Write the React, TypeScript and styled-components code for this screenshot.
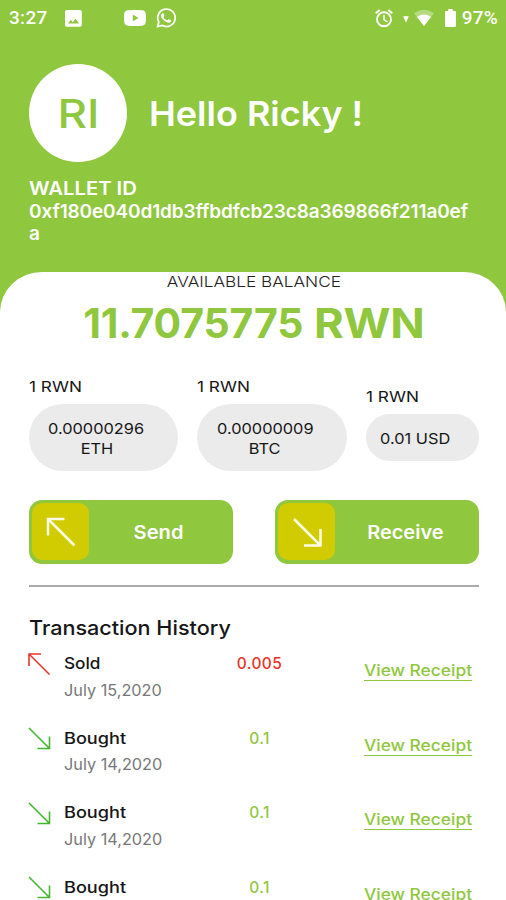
import React from "react";
import styled, { createGlobalStyle } from "styled-components";

const green = "#8fc73e";

const GlobalStyle = createGlobalStyle`
  * { box-sizing: border-box; }
  body {
    margin: 0;
    background: #fff;
    font-family: Inter, "Open Sans", sans-serif;
    color: #161616;
  }
`;

const Screen = styled.div`
  width: 506px;
  height: 900px;
  overflow: hidden;
  display: flex;
  flex-direction: column;
  background: ${green};
`;

const Wide = styled.span<{ $x: number; $origin?: string }>`
  display: inline-block;
  transform: scaleX(${(p) => p.$x});
  transform-origin: ${(p) => p.$origin ?? "left"} center;
`;

const StatusBar = styled.header`
  flex: none;
  height: 36px;
  padding: 0 8px 0 9px;
  display: flex;
  align-items: center;
  color: #fff;
  font: 500 19px/36px Roboto, sans-serif;
`;

const StatusText = styled.span<{ $spacing: number }>`
  letter-spacing: ${(p) => p.$spacing}px;
  white-space: nowrap;
`;

const StatusIcon = styled.svg<{ $gap: number }>`
  flex: none;
  display: block;
  margin-left: ${(p) => p.$gap}px;
`;

const Spacer = styled.div`
  flex: 1;
`;

const Profile = styled.section`
  flex: none;
  margin: 28px 29px 0;
  display: flex;
  align-items: center;
  gap: 21.5px;
`;

const Avatar = styled.div`
  width: 98px;
  height: 98px;
  border-radius: 50%;
  background: #fff;
  color: ${green};
  display: flex;
  align-items: center;
  justify-content: center;
  font-size: 40px;
  font-weight: 500;
`;

const Greeting = styled.h1`
  margin: 0;
  color: #fff;
  font-size: 34px;
  font-weight: 600;
  white-space: nowrap;
`;

const Wallet = styled.section`
  flex: none;
  margin: 16px 29px 0;
  height: 93.5px;
  color: #fff;
  font-size: 19px;
  line-height: 22.5px;
  font-weight: 600;
`;

const WalletAddress = styled.div`
  letter-spacing: -0.13px;
  word-break: break-all;
`;

const Sheet = styled.main`
  flex: 1;
  min-height: 0;
  overflow: hidden;
  background: #fff;
  border-radius: 42px 42px 0 0 / 40px 40px 0 0;
  padding: 0 27px 0 29px;
  display: flex;
  flex-direction: column;
`;

const BalanceLabel = styled.div`
  flex: none;
  height: 20px;
  line-height: 20px;
  text-align: center;
  font-size: 15px;
  font-weight: 300;
  color: #222;
`;

const Balance = styled.div`
  flex: none;
  height: 64px;
  line-height: 63px;
  padding-right: 11px;
  text-align: center;
  font-size: 41px;
  font-weight: 700;
  letter-spacing: -0.2px;
  word-spacing: 1px;
  color: ${green};
  white-space: nowrap;
`;

const Rates = styled.section`
  flex: none;
  height: 96px;
  margin-top: 20px;
  display: flex;
  align-items: center;
  justify-content: space-between;
`;

const Rate = styled.div<{ $width: number }>`
  width: ${(p) => p.$width}px;
`;

const RateBase = styled.div`
  height: 28px;
  line-height: 22px;
  font-size: 15px;
  font-weight: 400;
`;

const RatePill = styled.div`
  padding: 14.5px 28px 12.5px 14px;
  border-radius: 34px;
  background: #ebebeb;
  display: flex;
  flex-direction: column;
  align-items: center;
  font-size: 15px;
  line-height: 20px;
  font-weight: 400;
  white-space: nowrap;
`;

const Actions = styled.section`
  flex: none;
  margin-top: 28px;
  display: flex;
  justify-content: space-between;
`;

const ActionButton = styled.button`
  width: 204px;
  height: 64.5px;
  padding: 0 0 0 3px;
  border: 0;
  border-radius: 13px;
  background: ${green};
  color: #fff;
  display: flex;
  align-items: center;
  font: 600 19px/24px Inter, sans-serif;
`;

const ActionIcon = styled.span`
  width: 57px;
  height: 57px;
  border-radius: 10px;
  background: #d1cb02;
  display: flex;
  align-items: center;
  justify-content: center;
  padding: 1px 0 0 2px;
`;

const ActionLabel = styled.span`
  flex: 1;
  padding: 2px 4px 0 0;
  text-align: center;
`;

const Divider = styled.hr`
  flex: none;
  width: 100%;
  height: 1.5px;
  margin: 21px 0 0;
  border: 0;
  background: #aaa;
`;

const HistoryTitle = styled.h2`
  flex: none;
  margin: 27.5px 0 10px;
  line-height: 28px;
  font-size: 20px;
  font-weight: 500;
`;

const Transaction = styled.article`
  flex: none;
  height: 74.5px;
  display: grid;
  grid-template-columns: 35px 140px 111px 1fr;
`;

const Kind = styled.div`
  font-size: 15.5px;
  line-height: 24px;
  font-weight: 500;
`;

const DateText = styled.div`
  margin-top: 2.5px;
  font-size: 15.5px;
  line-height: 24px;
  font-weight: 400;
  color: #777;
`;

const Amount = styled.div<{ $sold: boolean }>`
  text-align: center;
  font-size: 15.5px;
  line-height: 24px;
  font-weight: 500;
  letter-spacing: 0.4px;
  color: ${(p) => (p.$sold ? "#ea3328" : green)};
`;

const ReceiptLink = styled.a`
  justify-self: end;
  align-self: start;
  width: 108px;
  margin: 7px 7.5px 0 0;
  height: 22px;
  line-height: 23px;
  border-bottom: 1.5px solid ${green};
  font-size: 15.5px;
  font-weight: 500;
  color: ${green};
  white-space: nowrap;
`;

const ArrowSvg = styled.svg`
  display: block;
  overflow: visible;
`;

const TransactionIcon = styled.div`
  padding: 1.5px 0 0 0.3px;
`;

interface ArrowProps {
  up: boolean;
  size: number;
  color: string;
  stroke: number;
  head: number;
}

function Arrow({ up, size, color, stroke, head }: ArrowProps) {
  const d = up
    ? `M${size} ${size} L0 0 M${head} 0 H0 V${head}`
    : `M0 0 L${size} ${size} M${size} ${size - head} V${size} H${size - head}`;
  return (
    <ArrowSvg width={size} height={size} viewBox={`0 0 ${size} ${size}`} fill="none">
      <path d={d} stroke={color} strokeWidth={stroke} />
    </ArrowSvg>
  );
}

const rates = [
  { lines: ["0.00000296", "ETH"], width: 149 },
  { lines: ["0.00000009", "BTC"], width: 150 },
  { lines: ["0.01 USD"], width: 113 },
];

const transactions = [
  { kind: "Sold", date: "July 15,2020", amount: "0.005" },
  { kind: "Bought", date: "July 14,2020", amount: "0.1" },
  { kind: "Bought", date: "July 14,2020", amount: "0.1" },
  { kind: "Bought", date: "July 14,2020", amount: "0.1" },
];

function Status() {
  return (
    <StatusBar>
      <StatusText $spacing={0.3}>3:27</StatusText>
      <StatusIcon $gap={17} width="17" height="17" viewBox="0 0 17 17">
        <path fill="#fff" fillRule="evenodd" d="M1.8 0H15a1.8 1.8 0 0 1 1.8 1.8V15a1.8 1.8 0 0 1-1.8 1.8H1.8A1.8 1.8 0 0 1 0 15V1.8A1.8 1.8 0 0 1 1.8 0ZM3 13.5h11L10.6 8.7 7.8 12.2 5.9 9.8Z" />
      </StatusIcon>
      <StatusIcon $gap={42} width="22" height="16" viewBox="0 0 22 16">
        <path fill="#fff" fillRule="evenodd" d="M4 .3Q11-.3 18 .3Q21.5.5 21.8 4Q22.2 8 21.8 12Q21.5 15.3 18 15.7Q11 16.3 4 15.7Q.5 15.3.2 12Q-.2 8 .2 4Q.5.5 4 .3ZM8.8 4.6v6.6L14.5 7.9Z" />
      </StatusIcon>
      <StatusIcon $gap={10} width="20" height="20" viewBox="0 0 24 24">
        <path fill="#fff" d="M17.472 14.382c-.297-.149-1.758-.867-2.03-.967-.273-.099-.471-.148-.67.15-.197.297-.767.966-.94 1.164-.173.199-.347.223-.644.075-.297-.15-1.255-.463-2.39-1.475-.883-.788-1.48-1.761-1.653-2.059-.173-.297-.018-.458.13-.606.134-.133.298-.347.446-.52.149-.174.198-.298.298-.497.099-.198.05-.371-.025-.52-.075-.149-.669-1.612-.916-2.207-.242-.579-.487-.5-.669-.51-.173-.008-.371-.01-.57-.01-.198 0-.52.074-.792.372-.272.297-1.04 1.016-1.04 2.479 0 1.462 1.065 2.875 1.213 3.074.149.198 2.096 3.2 5.077 4.487.709.306 1.262.489 1.694.625.712.227 1.36.195 1.871.118.571-.085 1.758-.719 2.006-1.413.248-.694.248-1.289.173-1.413-.074-.124-.272-.198-.57-.347" />
        <path fill="none" stroke="#fff" strokeWidth="2.1" d="M2 22.2 3.4 16.9A10.5 10.5 0 1 1 7.2 20.8Z" />
      </StatusIcon>
      <Spacer />
      <StatusIcon $gap={0} width="18" height="19" viewBox="0 0 18 19" fill="none" stroke="#fff">
        <circle cx="9" cy="10.3" r="7" strokeWidth="1.9" />
        <path strokeWidth="1.5" d="M9 6v4.6l3.4 2.2" />
        <path strokeWidth="2" d="M.7 4.2 4.7 1M17.3 4.2 13.3 1" />
      </StatusIcon>
      <StatusIcon $gap={10} width="6" height="10" viewBox="0 0 6 10">
        <path fill="#fff" d="M.2 3.2H5.8L3 9.8Z" />
      </StatusIcon>
      <StatusIcon $gap={5} width="20" height="16" viewBox="0 0 20 16">
        <path fill="#fff" fillOpacity=".35" d="M0 3.2Q10-3.2 20 3.2L10 16Z" />
        <path fill="#fff" d="M3 6.9Q10 2.2 17 6.9L10 16Z" />
      </StatusIcon>
      <StatusIcon $gap={11} width="11" height="18" viewBox="0 0 11 18">
        <path fill="#fff" d="M3.2 0H7.8V2H9.8Q11 2 11 3.2V16.8Q11 18 9.8 18H1.2Q0 18 0 16.8V3.2Q0 2 1.2 2H3.2Z" />
      </StatusIcon>
      <StatusIcon $gap={5} width="1" height="1" />
      <StatusText $spacing={0.2}>97%</StatusText>
    </StatusBar>
  );
}

export default function App() {
  return (
    <>
      <GlobalStyle />
      <Screen>
        <Status />
        <Profile>
          <Avatar>
            <Wide $x={1.14} $origin="center">RI</Wide>
          </Avatar>
          <Greeting>
            <Wide $x={1.058}>Hello Ricky !</Wide>
          </Greeting>
        </Profile>
        <Wallet>
          <div>
            <Wide $x={1.065}>WALLET ID</Wide>
          </div>
          <WalletAddress>0xf180e040d1db3ffbdfcb23c8a369866f211a0efa</WalletAddress>
        </Wallet>
        <Sheet>
          <BalanceLabel>
            <Wide $x={1.147} $origin="center">AVAILABLE BALANCE</Wide>
          </BalanceLabel>
          <Balance>
            11.7075775 <Wide $x={1.105}>RWN</Wide>
          </Balance>
          <Rates>
            {rates.map((rate) => (
              <Rate key={rate.lines[0]} $width={rate.width}>
                <RateBase>
                  <Wide $x={1.15}>1 RWN</Wide>
                </RateBase>
                <RatePill>
                  {rate.lines.map((line) => (
                    <Wide key={line} $x={1.09} $origin="center">{line}</Wide>
                  ))}
                </RatePill>
              </Rate>
            ))}
          </Rates>
          <Actions>
            <ActionButton>
              <ActionIcon>
                <Arrow up size={26.5} head={16.5} color="#fffbe6" stroke={2.5} />
              </ActionIcon>
              <ActionLabel>
                <Wide $x={1.06} $origin="center">Send</Wide>
              </ActionLabel>
            </ActionButton>
            <ActionButton>
              <ActionIcon>
                <Arrow up={false} size={26.5} head={16.5} color="#fffbe6" stroke={2.5} />
              </ActionIcon>
              <ActionLabel>
                <Wide $x={1.05} $origin="center">Receive</Wide>
              </ActionLabel>
            </ActionButton>
          </Actions>
          <Divider />
          <HistoryTitle>
            <Wide $x={1.08}>Transaction History</Wide>
          </HistoryTitle>
          {transactions.map((item, index) => {
            const sold = item.kind === "Sold";
            return (
              <Transaction key={index}>
                <TransactionIcon>
                  <Arrow up={sold} size={20.5} head={12} color={sold ? "#e8352c" : "#43b82e"} stroke={1.6} />
                </TransactionIcon>
                <div>
                  <Kind>
                    <Wide $x={sold ? 1.11 : 1.17}>{item.kind}</Wide>
                  </Kind>
                  <DateText>
                    <Wide $x={1.05}>{item.date}</Wide>
                  </DateText>
                </div>
                <Amount $sold={sold}>{item.amount}</Amount>
                <ReceiptLink>
                  <Wide $x={1.12}>View Receipt</Wide>
                </ReceiptLink>
              </Transaction>
            );
          })}
        </Sheet>
      </Screen>
    </>
  );
}
